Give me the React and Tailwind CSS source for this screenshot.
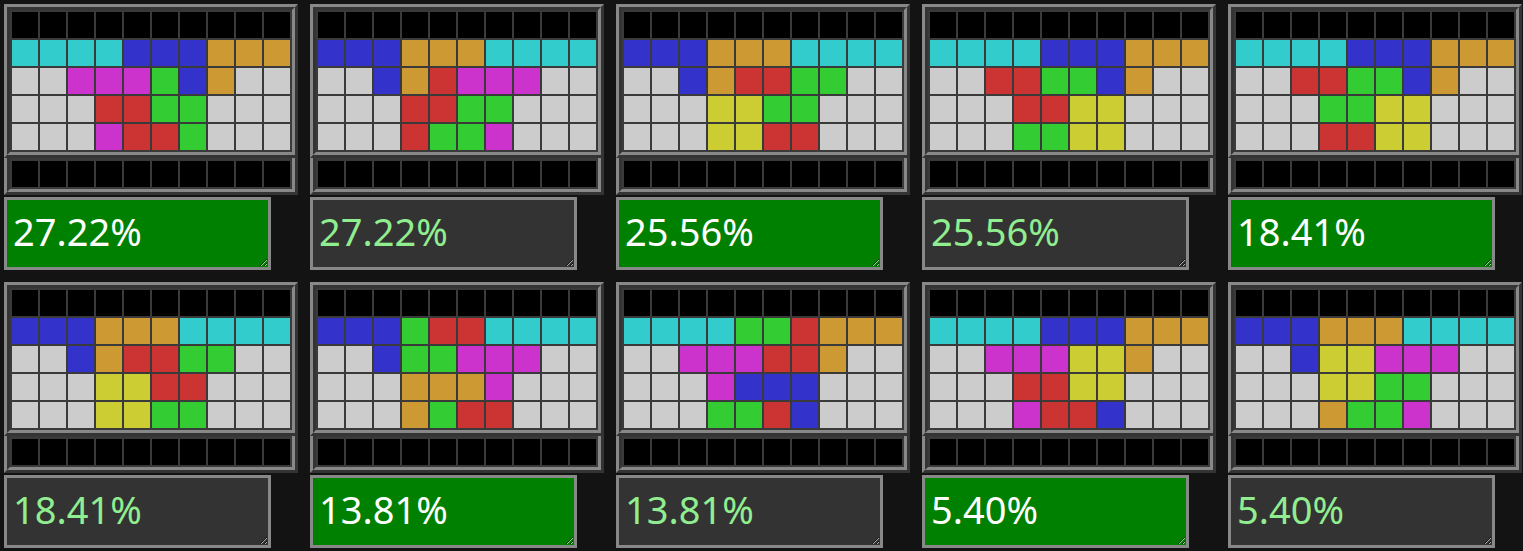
import React from "react";

// piece colours keyed by letter
const COLORS = {
  K: "bg-[#000000]",
  E: "bg-[#cccccc]",
  C: "bg-[#33cccc]",
  B: "bg-[#3333cc]",
  O: "bg-[#cc9933]",
  M: "bg-[#cc33cc]",
  G: "bg-[#33cc33]",
  R: "bg-[#cc3333]",
  Y: "bg-[#cccc33]",
};

const EMPTY_ROW = "KKKKKKKKKK";

const CARDS = [
  { pct: "27.22%", best: true, rows: ["CCCCBBBOOO", "EEMMMGBOEE", "EEERRGGEEE", "EEEMRRGEEE"] },
  { pct: "27.22%", best: false, rows: ["BBBOOOCCCC", "EEBORMMMEE", "EEERRGGEEE", "EEERGGMEEE"] },
  { pct: "25.56%", best: true, rows: ["BBBOOOCCCC", "EEBORRGGEE", "EEEYYGGEEE", "EEEYYRREEE"] },
  { pct: "25.56%", best: false, rows: ["CCCCBBBOOO", "EERRGGBOEE", "EEERRYYEEE", "EEEGGYYEEE"] },
  { pct: "18.41%", best: true, rows: ["CCCCBBBOOO", "EERRGGBOEE", "EEEGGYYEEE", "EEERRYYEEE"] },
  { pct: "18.41%", best: false, rows: ["BBBOOOCCCC", "EEBORRGGEE", "EEEYYRREEE", "EEEYYGGEEE"] },
  { pct: "13.81%", best: true, rows: ["BBBGRRCCCC", "EEBGGMMMEE", "EEEOOOMEEE", "EEEOGRREEE"] },
  { pct: "13.81%", best: false, rows: ["CCCCGGROOO", "EEMMMRROEE", "EEEMBBBEEE", "EEEGGRBEEE"] },
  { pct: "5.40%", best: true, rows: ["CCCCBBBOOO", "EEMMMYYOEE", "EEERRYYEEE", "EEEMRRBEEE"] },
  { pct: "5.40%", best: false, rows: ["BBBOOOCCCC", "EEBYYMMMEE", "EEEYYGGEEE", "EEEOGGMEEE"] },
];

const Row = ({ cells }) => (
  <>
    {cells.split("").map((c, i) => (
      <div key={i} className={`h-[26px] ${COLORS[c]}`} />
    ))}
  </>
);

const Card = ({ card }) => (
  <div className="flex flex-col w-[294px]">
    <div className="border-[6px] border-[#888888] [border-style:ridge] bg-[#3a3a3a] p-[2px]">
      <div className="grid grid-cols-10 gap-[2px]">
        <Row cells={EMPTY_ROW} />
        {card.rows.map((r, i) => (
          <Row key={i} cells={r} />
        ))}
      </div>
    </div>
    <div className="border-[6px] border-t-0 border-[#888888] [border-style:ridge] bg-[#3a3a3a] px-[2px] pt-[3px] pb-[2px]">
      <div className="grid grid-cols-10 gap-[2px]">
        <Row cells={EMPTY_ROW} />
      </div>
    </div>
    <textarea
      readOnly
      value={card.pct}
      className={`mt-[2px] w-[267px] h-[73px] border-[3px] border-[#888888] resize overflow-hidden outline-none pl-[6px] pt-[8px] text-[38px] leading-[46px] font-['Noto_Sans',sans-serif] ${
        card.best ? "bg-[#008000] text-white" : "bg-[#333333] text-[#90ee90]"
      }`}
    />
  </div>
);

export default function App() {
  return (
    <div className="min-h-screen bg-[#131313] p-[4px]">
      <div className="grid grid-cols-[repeat(5,294px)] gap-[12px]">
        {CARDS.map((card, i) => (
          <Card key={i} card={card} />
        ))}
      </div>
    </div>
  );
}
